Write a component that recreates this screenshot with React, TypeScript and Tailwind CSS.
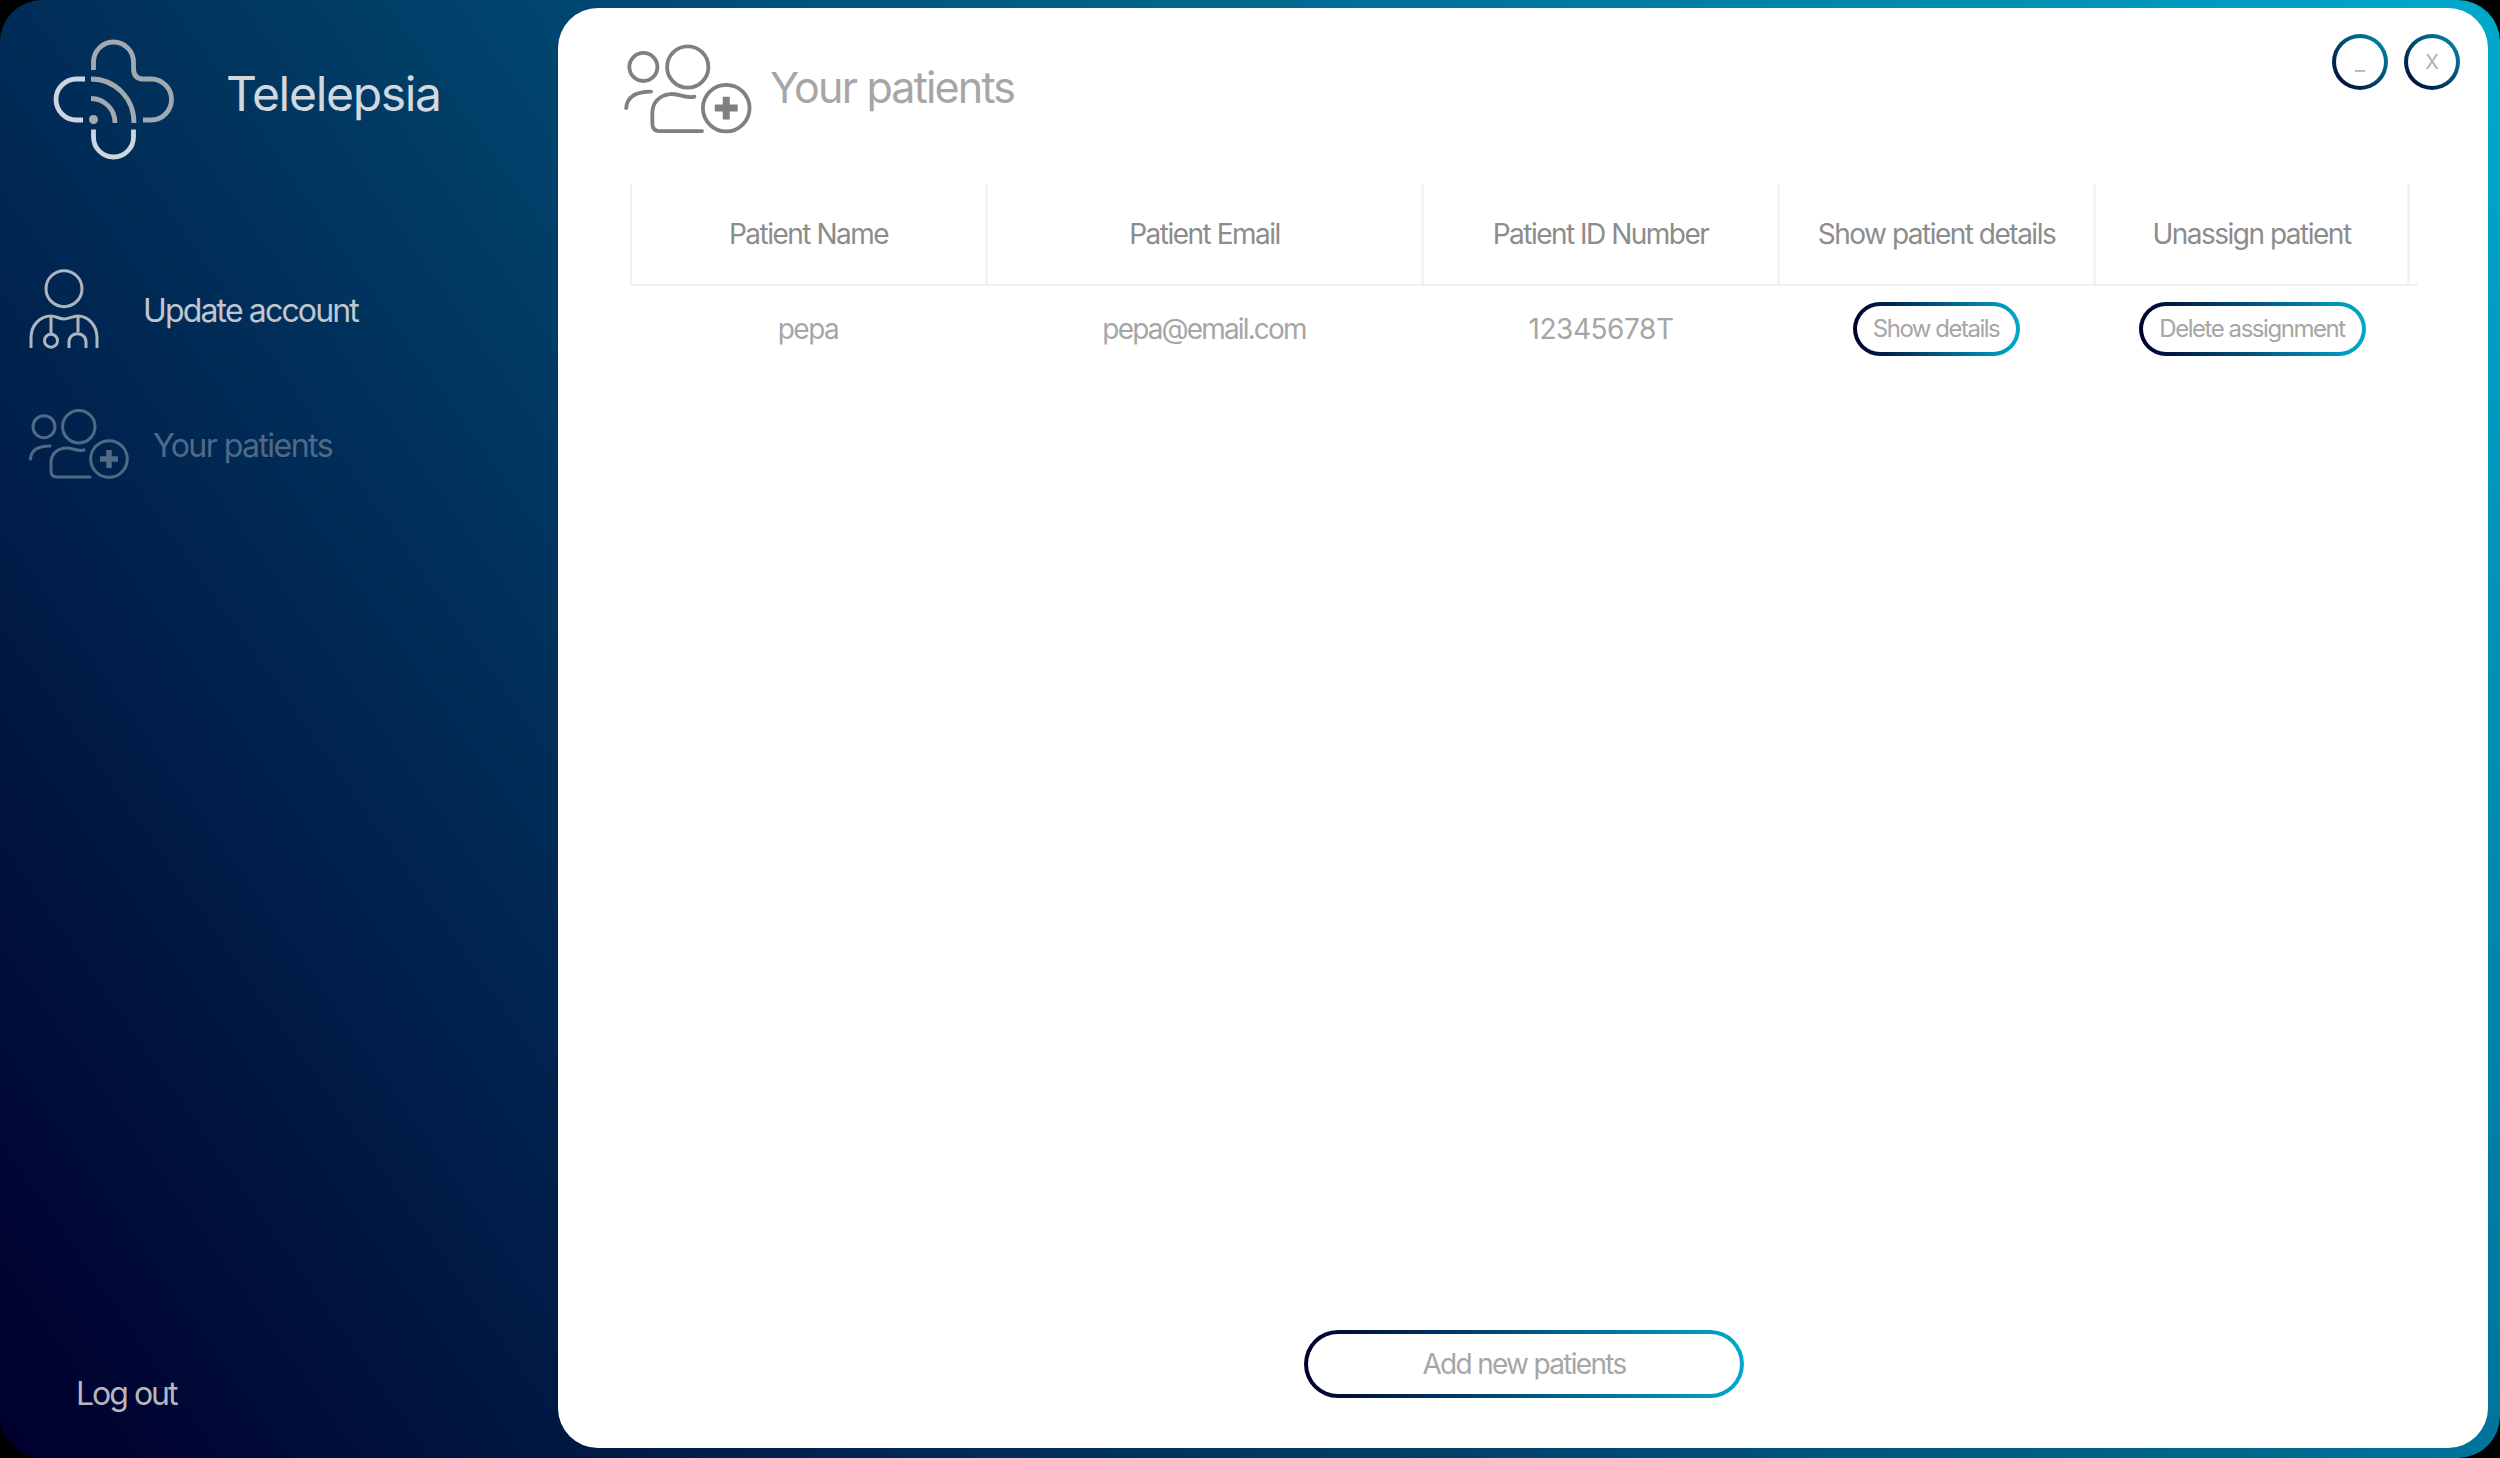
const LogoIcon = () => (
  <svg viewBox="0 0 160 160" className="w-[160px] h-[160px] shrink-0" fill="none" strokeWidth="4.8">
    <path d="M63.5 50V42A20 20 0 0 1 103.5 42V48C103.5 55 106.5 59 113 59H121A20.5 20.5 0 0 1 121 100H113" stroke="#a3a9b0" />
    <path d="M61 59C85 59 104 78 104 103" stroke="#a3a9b0" />
    <path d="M61 78.500C74.500 78.500 85 89.500 85 103" stroke="#a3a9b0" />
    <circle cx="63.500" cy="99.500" r="4.500" fill="#a3a9b0" stroke="none" />
    <path d="M55 59H46.500A20.500 20.500 0 0 0 46.500 100H53" stroke="#cdd5de" />
    <path d="M63.500 109.500V117A20 20 0 0 0 103.500 117V109.500" stroke="#cdd5de" />
  </svg>
);

const DoctorIcon = () => (
  <svg viewBox="28 268 72 82" className="w-[72px] h-[82px] shrink-0" fill="none" stroke="#aeb5bf" strokeWidth="3">
    <circle cx="64" cy="288.700" r="18" />
    <path d="M31 348V338C31 325 40 316 51 316C56 316 59 319 64 319C69 319 72 316 78 316C88 316 97 325 97 338V348" />
    <path d="M51 317V334" />
    <circle cx="51" cy="340.700" r="6.500" />
    <path d="M78 317V332" />
    <path d="M69 348V342C69 331 86 331 86 342V348" />
  </svg>
);

const PatientsIcon = ({ className, color }: { className: string; color: string }) => (
  <svg viewBox="28 408 102 72" className={className} fill="none" stroke={color} strokeWidth="3">
    <circle cx="44" cy="426.700" r="11" />
    <circle cx="78.800" cy="426.700" r="16.200" />
    <circle cx="109" cy="459" r="18.300" />
    <path d="M30.500 459C31 451 37 446 50 446" strokeLinecap="round" />
    <path d="M84 450C77 452 72 447 65 448C56 449 51 455 51 463V471C51 475 53 477 57 477H90" strokeLinecap="round" />
    <path d="M109 450V468M100 459H118" strokeWidth="5.500" />
  </svg>
);

const gradientBorder =
  "border-4 border-transparent rounded-full [background:linear-gradient(#fff,#fff)_padding-box,linear-gradient(to_right,#00002c,#00a9cc)_border-box]";
const roundBorder =
  "border-4 border-transparent rounded-full [background:linear-gradient(#fff,#fff)_padding-box,linear-gradient(to_top_right,#00002c,#0090b0)_border-box]";

const headers = [
  { label: "Patient Name", cls: "border-l-2" },
  { label: "Patient Email", cls: "" },
  { label: "Patient ID Number", cls: "" },
  { label: "Show patient details", cls: "" },
  { label: "Unassign patient", cls: "" },
];

export default function App() {
  return (
    <div className="w-[2500px] h-[1458px] bg-black font-['Inter',sans-serif] overflow-hidden">
      <div className="w-full h-full rounded-[42px] bg-linear-55 from-[#00002c] to-[#00aacc] flex pt-2 pr-3 pb-2.5">
        {/* sidebar */}
        <aside className="w-[558px] shrink-0 flex flex-col">
          <div className="flex items-center pl-[30px] pt-3 gap-9">
            <LogoIcon />
            <span className="text-[48px] leading-none tracking-[-1.3px] text-[#d3d8df] -mt-3">Telelepsia</span>
          </div>
          <div className="flex items-center pl-7 mt-[88px] gap-[43px]">
            <DoctorIcon />
            <span className="text-[32px] leading-none tracking-[-1.85px] text-[#c0c6cf] mt-1">Update account</span>
          </div>
          <div className="flex items-center pl-7 mt-[58px] gap-[23px]">
            <PatientsIcon className="w-[102px] h-[72px] shrink-0" color="#4f6a84" />
            <span className="text-[32px] leading-none tracking-[-1.55px] text-[#4f6a84] mt-[3px]">Your patients</span>
          </div>
          <div className="mt-auto pl-[76px] pb-[38px] text-[32px] leading-none tracking-[-2px] text-[#b5b7bd]">
            Log out
          </div>
        </aside>

        {/* main panel */}
        <main className="flex-1 bg-white rounded-[40px] flex flex-col relative">
          <header className="flex items-center pl-[65px] pt-[35px]">
            <PatientsIcon className="w-[130px] h-[92px] shrink-0" color="#808080" />
            <h1 className="ml-[17px] -mt-1 text-[43px] leading-none tracking-[-1.8px] text-[#a6a6a6]">Your patients</h1>
          </header>

          <div className="absolute top-[26px] right-7 flex gap-4">
            <button className={`w-14 h-14 ${roundBorder} text-[22px] text-[#b0b0b0] flex items-center justify-center`}>_</button>
            <button className={`w-14 h-14 ${roundBorder} text-[20px] text-[#b0b0b0] flex items-center justify-center`}>X</button>
          </div>

          <section className="ml-[72px] mt-[49px] w-[1788px]">
            <div className="grid grid-cols-[358px_436px_356px_316px_314px_8px] h-[102px] border-b-2 border-[#f2f2f2]">
              {headers.map((h) => (
                <div
                  key={h.label}
                  className={`${h.cls} border-r-[3px] border-[#f2f2f2] flex items-center justify-center text-[28px] tracking-[-1.5px] text-[#8c8c8c]`}
                >
                  {h.label}
                </div>
              ))}
            </div>
            <div className="grid grid-cols-[358px_436px_356px_316px_314px_8px] items-center pt-4 text-[28px] text-[#a6a6a6]">
              <div className="text-center pr-0.5 tracking-[-1.5px]">pepa</div>
              <div className="text-center pr-1 tracking-[-1.85px]">pepa@email.com</div>
              <div className="text-center pr-0.5 tracking-[-0.45px]">12345678T</div>
              <div className="flex justify-center pr-1">
                <button className={`w-[167px] h-[54px] ${gradientBorder} text-[24px] tracking-[-1.5px] text-[#a6a6a6]`}>Show details</button>
              </div>
              <div className="flex justify-center pr-0.5">
                <button className={`w-[227px] h-[54px] ${gradientBorder} text-[24px] tracking-[-1.45px] text-[#a6a6a6]`}>Delete assignment</button>
              </div>
            </div>
          </section>

          <div className="mt-auto pb-[50px] pl-0.5 flex justify-center">
            <button className={`w-[440px] h-[68px] ${gradientBorder} text-[28px] tracking-[-1.7px] text-[#a6a6a6]`}>Add new patients</button>
          </div>
        </main>
      </div>
    </div>
  );
}
